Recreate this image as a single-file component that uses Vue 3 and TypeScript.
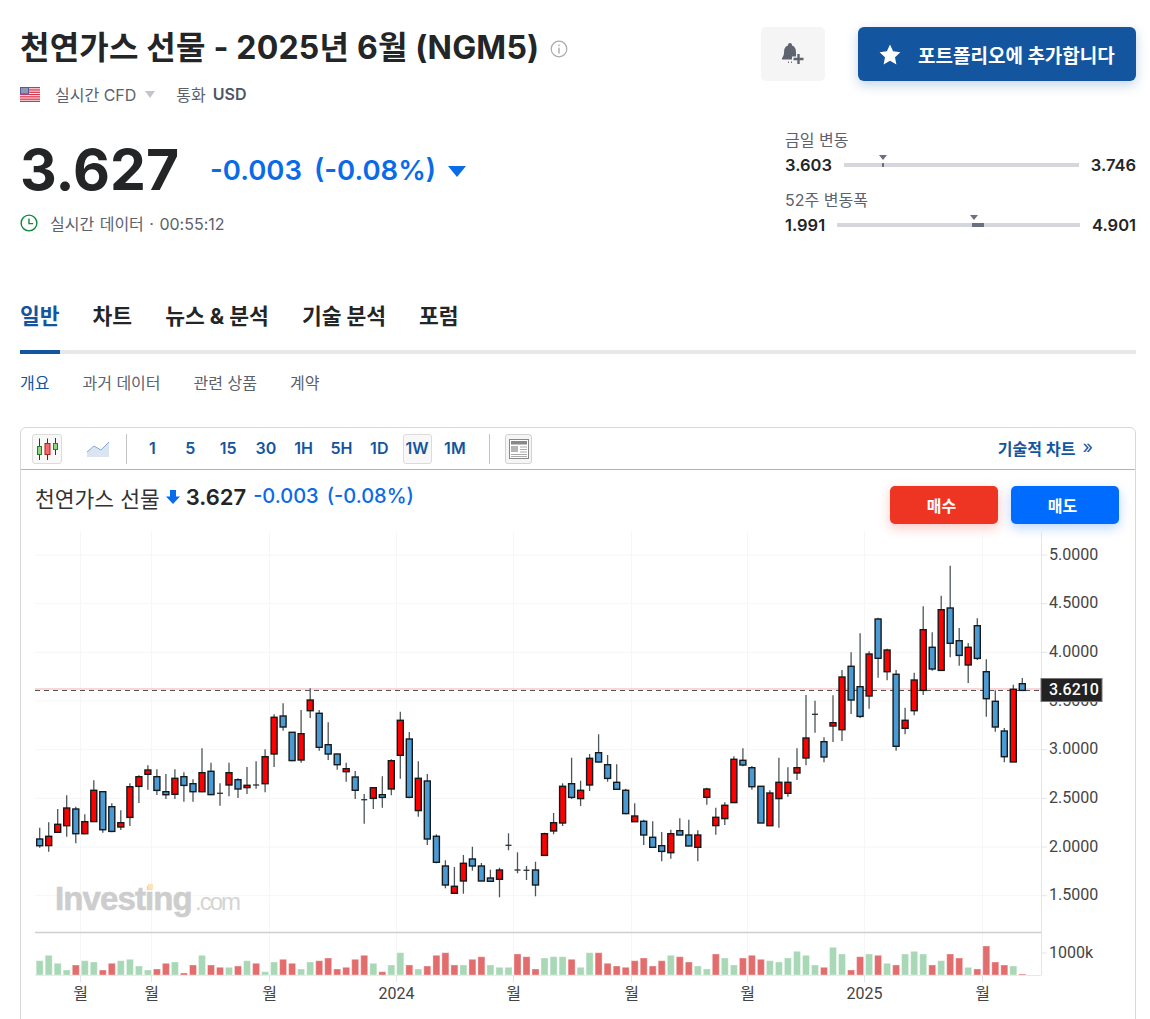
<script setup lang="ts">
type Kind = 'r' | 'b' | 'd'
type Raw = [number, number, number, number, Kind]

const seg1: Raw[] = [
  [443,477,497,503,'b'],[427,469,497,515,'r'],[387,433,457,459,'r'],[346,384,437,470,'r'],[380,387,461,490,'b'],
  [403,425,461,463,'r'],[301,331,425,425,'r'],[335,335,449,458,'b'],[370,380,454,457,'b'],[391,428,441,450,'r'],
  [310,320,412,438,'r'],[286,290,319,369,'r'],[256,270,283,329,'r'],[268,290,331,345,'b'],[282,335,344,357,'b'],
  [268,295,343,357,'r'],[277,290,316,365,'b'],[298,311,335,365,'b'],[205,278,335,337,'r'],[248,274,344,346,'b'],
  [310,340,343,377,'d'],[248,278,315,349,'r'],[295,299,327,354,'b'],[261,316,323,342,'r'],[244,315,316,326,'d'],
  [208,230,311,337,'r'],[103,112,222,261,'r'],[70,108,141,152,'b'],[157,157,242,244,'b'],[90,161,240,248,'r'],
  [25,60,92,114,'r'],[90,100,202,212,'b'],[127,194,222,240,'b'],[221,222,254,269,'b'],[248,266,275,305,'r'],
  [273,291,331,357,'b'],[342,359,360,431,'d'],[323,323,355,387,'r'],[289,344,352,383,'b'],[238,242,327,346,'r'],
  [95,121,226,296,'r'],
  [156,177,352,355,'b'],[244,295,392,410,'r'],[282,303,477,495,'b'],[463,469,547,550,'b'],[541,558,615,625,'b'],
  [561,619,640,640,'r'],[525,550,603,641,'r'],[500,537,558,572,'b'],[549,558,603,604,'b'],[569,594,604,604,'b'],
  [563,570,598,652,'r'],[460,496,497,511,'d'],[517,570,571,580,'d'],[558,571,574,600,'d'],[545,570,615,649,'b'],
  [458,461,526,526,'r'],[399,428,453,463,'r'],[310,319,429,438,'r'],[233,311,352,357,'b'],[302,331,356,378,'r'],
  [222,235,315,333,'r'],[163,218,246,248,'b'],[225,254,295,305,'b'],[253,307,328,329,'b'],[326,331,401,403,'b'],
  [370,408,425,425,'r'],[419,424,465,495,'b'],[424,472,502,502,'b'],[456,497,514,544,'b'],[449,461,518,536,'r'],
  [415,452,465,466,'b'],[419,465,498,499,'b'],[451,465,502,544,'r'],[323,327,352,374,'r'],[383,412,437,464,'r'],
  [367,376,416,435,'r'],[229,238,368,368,'r'],[205,241,255,259,'b'],[258,263,320,329,'b'],[319,319,429,429,'b'],
  [331,339,437,437,'r'],[233,307,356,443,'r'],[262,307,340,350,'r'],
]
const seg2: Raw[] = [
  [655,713,729,750,'r'],[495,624,684,706,'r'],[512,553,554,608,'d'],[622,635,681,697,'b'],[496,578,588,636,'r'],
  [420,441,599,633,'r'],[367,409,510,552,'b'],[310,470,559,564,'b'],[364,372,498,536,'r'],[263,267,385,443,'b'],
  [356,360,425,451,'r'],[420,433,649,662,'b'],[533,571,595,613,'r'],[428,450,542,556,'r'],[229,299,481,495,'r'],
  [307,352,417,422,'b'],[197,239,421,421,'r'],[107,234,340,382,'b'],[294,332,376,407,'b'],[339,352,405,459,'r'],
  [265,287,385,390,'b'],[388,425,506,560,'b'],[481,514,591,605,'b'],[594,603,680,697,'b'],[464,478,696,696,'r'],
  [444,461,481,482,'b'],
]
const STEP = 9.015
const candles = [
  ...seg1.map((c) => ({ c, base: 680 })),
  ...seg2.map((c) => ({ c, base: 530 })),
].map(({ c, base }, i) => {
  const [hi, top, bot, lo, kind] = c
  const x = 39.7 + STEP * i
  const toY = (z: number) => +(base + z / 3).toFixed(1)
  return { x: +x.toFixed(1), hi: toY(hi), top: toY(top), h: +((bot - top) / 3).toFixed(1), lo: toY(lo), kind }
})

const volTops = [
  122,106,130,150,135,122,126,150,130,122,118,138,150,147,130,126,159,135,106,135,
  142,142,138,122,130,155,126,118,130,147,126,122,114,147,142,118,106,130,155,135,
  98,135,147,138,106,98,135,135,118,110,135,142,142,102,110,147,114,110,110,118,142,
  98,98,130,138,142,122,114,138,122,106,110,126,138,147,102,114,135,114,106,118,
  122,126,114,94,106,135,142,82,102,150,110,102,106,130,135,102,94,102,135,122,
  102,114,142,147,78,126,135,138,162,
]
const volColors =
  'ggggrggrrggggrrgrrgrrgrgrggrrggrrrrrrgrggrgrrrrgrrgggrrrgggrg' +
  'grrrrrrrrgrrggrggrrrggggggrggrrgrgrgggrgrrgrrrrgr'
const volumes = volTops.map((t, i) => ({
  x: +(39.7 + STEP * i - 3.5).toFixed(1),
  y: +(920 + t / 3).toFixed(1),
  h: +(55 - t / 3).toFixed(1),
  up: volColors[i] === 'g',
}))

const prices = ['5.0000','4.5000','4.0000','3.5000','3.0000','2.5000','2.0000','1.5000'].map((label, i) => ({
  label,
  y: +(555 + 48.67 * i).toFixed(1),
}))
const months = [
  { x: 80, t: '월' }, { x: 151, t: '월' }, { x: 269, t: '월' }, { x: 396, t: '2024' }, { x: 513, t: '월' },
  { x: 631, t: '월' }, { x: 747, t: '월' }, { x: 864, t: '2025' }, { x: 982, t: '월' },
]
const intervals = ['1','5','15','30','1H','5H','1D','1W','1M']
const tabs = ['일반','차트','뉴스 & 분석','기술 분석','포럼']
const subTabs = ['개요','과거 데이터','관련 상품','계약']
const ranges = [
  { label: '금일 변동', low: '3.603', high: '3.746', tri: 16.7, segLeft: 16.2, segWidth: '2px' },
  { label: '52주 변동폭', low: '1.991', high: '4.901', tri: 56.2, segLeft: 55.4, segWidth: '12px' },
]
</script>

<template>
  <div class="page">
    <section class="top">
      <div class="left">
        <div class="title-row">
          <h1 class="title">천연가스 선물 - 2025년 6월 (NGM5)</h1>
          <svg class="info" width="18" height="18" viewBox="0 0 18 18">
            <circle cx="9" cy="9" r="7.8" fill="none" stroke="#a8abb0" stroke-width="1.2" />
            <rect x="8.3" y="7.6" width="1.4" height="6" fill="#a8abb0" />
            <rect x="8.3" y="4.6" width="1.4" height="1.5" fill="#a8abb0" />
          </svg>
        </div>
        <div class="meta">
          <svg class="flag" width="20" height="15" viewBox="0 0 20 15">
            <rect width="20" height="15" fill="#fff" />
            <g fill="#d8324a">
              <rect y="0" width="20" height="1.3" /><rect y="2.3" width="20" height="1.3" />
              <rect y="4.6" width="20" height="1.3" /><rect y="6.9" width="20" height="1.3" />
              <rect y="9.2" width="20" height="1.3" /><rect y="11.5" width="20" height="1.3" />
              <rect y="13.7" width="20" height="1.3" />
            </g>
            <rect width="9" height="7.4" fill="#585c96" />
            <rect x="1" y="1" width="7" height="5.4" fill="#9296b8" />
          </svg>
          <span class="meta-text">실시간 CFD</span>
          <i class="meta-caret"></i>
          <span class="meta-text cur">통화</span>
          <b class="meta-usd">USD</b>
        </div>
        <div class="price-row">
          <span class="price">3.627</span>
          <span class="change">-0.003</span>
          <span class="change pct">(-0.08%)</span>
          <i class="down-tri"></i>
        </div>
        <div class="clock-row">
          <svg width="18" height="18" viewBox="0 0 18 18">
            <circle cx="9" cy="9" r="7.9" fill="none" stroke="#0c8a3a" stroke-width="1.4" />
            <path d="M9 4.4V9.6H13.2" fill="none" stroke="#0c8a3a" stroke-width="1.4" />
          </svg>
          <span>실시간 데이터 · 00:55:12</span>
        </div>
      </div>
      <div class="right">
        <div class="actions">
          <button class="bell-btn">
            <svg width="26" height="24" viewBox="0 0 26 24">
              <path fill="#5f6470" d="M10 1c1.2 0 2 .9 2 2v.6c2.6.8 3.9 3 3.9 5.6 0 3.2.7 5 2.1 6.8v1.5H2v-1.5c1.4-1.8 2.1-3.6 2.1-6.8 0-2.6 1.3-4.8 3.9-5.6V3c0-1.1.8-2 2-2z" />
              <path d="M8 20.2h.9M11 20.2h.9" stroke="#5f6470" stroke-width="1.6" />
              <path d="M18.5 10.5v13M12 17h13" stroke="#f5f5f6" stroke-width="5" />
              <path d="M18.5 12v10M13.5 17h10" stroke="#5f6470" stroke-width="2.4" />
            </svg>
          </button>
          <button class="add-btn">
            <svg width="22" height="21" viewBox="0 0 22 21">
              <path fill="#fff" d="M11 .6l3.1 6.7 7.3.9-5.4 5 1.4 7.2L11 16.8l-6.4 3.6L6 13.2.6 8.2l7.3-.9z" />
            </svg>
            <span>포트폴리오에 추가합니다</span>
          </button>
        </div>
        <div class="ranges">
          <div v-for="r in ranges" :key="r.label" class="range">
            <div class="range-label">{{ r.label }}</div>
            <div class="range-row">
              <b>{{ r.low }}</b>
              <div class="bar">
                <i class="bar-tri" :style="{ left: r.tri + '%' }"></i>
                <i class="bar-seg" :style="{ left: r.segLeft + '%', width: r.segWidth }"></i>
              </div>
              <b>{{ r.high }}</b>
            </div>
          </div>
        </div>
      </div>
    </section>

    <nav class="tabs">
      <a v-for="(t, i) in tabs" :key="t" class="tab" :class="{ active: i === 0 }">{{ t }}</a>
    </nav>
    <nav class="subtabs">
      <a v-for="(t, i) in subTabs" :key="t" class="subtab" :class="{ active: i === 0 }">{{ t }}</a>
    </nav>

    <section class="card">
      <div class="toolbar">
        <button class="tool-btn boxed">
          <svg width="28" height="28" viewBox="0 0 28 28">
            <path d="M6.5 3.5V25M14.5 3.5V25M22.5 3V20" stroke="#333" stroke-width="1" />
            <rect x="4.5" y="11.5" width="4" height="8" fill="#8fd27f" stroke="#2d7a2d" />
            <rect x="12" y="8.5" width="5" height="11" fill="#f46a6a" stroke="#b02020" />
            <rect x="20.5" y="8.5" width="4" height="6" fill="#8fd27f" stroke="#2d7a2d" />
          </svg>
        </button>
        <button class="tool-btn area">
          <svg width="24" height="18" viewBox="0 0 24 18">
            <path d="M1 12L8 6l7 4 8-8v15H1z" fill="#dbe5f2" />
            <path d="M1 12L8 6l7 4 8-8" fill="none" stroke="#8aa8cf" stroke-width="1" />
          </svg>
        </button>
        <i class="tool-sep first"></i>
        <div class="intervals">
          <button v-for="v in intervals" :key="v" class="interval" :class="{ on: v === '1W' }">{{ v }}</button>
        </div>
        <i class="tool-sep second"></i>
        <button class="tool-btn news">
          <svg width="20" height="20" viewBox="0 0 20 20">
            <rect x="0.5" y="0.5" width="19" height="19" fill="#fff" stroke="#888" />
            <rect x="2" y="2" width="16" height="3.5" fill="#888" />
            <rect x="2" y="7" width="7" height="6" fill="#b5b5b5" />
            <path d="M11 8h7M11 10.5h7M11 13h7M2 15.5h16M2 17.5h16" stroke="#aaa" stroke-width="1" />
          </svg>
        </button>
        <a class="tech-link">기술적 차트<span class="chev">»</span></a>
      </div>

      <div class="legend">
        <div class="legend-info">
          <span class="legend-name">천연가스 선물</span>
          <svg class="legend-arrow" width="14" height="14" viewBox="0 0 14 14">
            <path d="M4 0h6v6.5h4L7 14 0 6.5h4z" fill="#0a6be8" />
          </svg>
          <b class="legend-price">3.627</b>
          <span class="legend-change">-0.003</span>
          <span class="legend-change">(-0.08%)</span>
        </div>
        <div class="trade">
          <button class="buy">매수</button>
          <button class="sell">매도</button>
        </div>
      </div>

      <svg class="chart" width="1114" height="487" viewBox="21 532 1114 487">
        <g stroke="#f6f6f7" stroke-width="1">
          <line v-for="m in months" :key="'v' + m.x" :x1="m.x + 0.5" :x2="m.x + 0.5" y1="532" y2="975" />
          <line v-for="p in prices" :key="'h' + p.label" x1="35" x2="1041" :y1="p.y" :y2="p.y" />
        </g>
        <text class="wm-a" x="55" y="910">Investing</text>
        <text class="wm-b" x="195" y="910">.com</text>
        <rect x="148" y="884" width="5" height="5.5" fill="#fbe3bc" />

        <line x1="35" x2="1041" y1="689" y2="689" stroke="#f8c8c8" stroke-width="1.5" />
        <line x1="35" x2="1041" y1="690.5" y2="690.5" stroke="#555" stroke-width="1" stroke-dasharray="5 4" />

        <g v-for="(c, i) in candles" :key="i">
          <line :x1="c.x" :x2="c.x" :y1="c.hi" :y2="c.lo" stroke="#4c5659" stroke-width="1.3" />
          <line v-if="c.kind === 'd'" :x1="c.x - 3" :x2="c.x + 3" :y1="c.top" :y2="c.top" stroke="#2a3033" stroke-width="1.3" />
          <rect
            v-else
            :x="c.x - 3"
            :y="c.top"
            width="6"
            :height="c.h"
            :fill="c.kind === 'r' ? '#ff0000' : '#4a9bd4'"
            stroke="#16191b"
            stroke-width="1.4"
          />
        </g>

        <line x1="1041.5" x2="1041.5" y1="532" y2="975" stroke="#e2e5eb" />
        <line x1="35" x2="1041" y1="932.5" y2="932.5" stroke="#cfcfcf" stroke-width="1.5" />
        <line x1="35" x2="1041" y1="975.5" y2="975.5" stroke="#e4e8ee" />

        <rect
          v-for="(v, i) in volumes"
          :key="'vol' + i"
          :x="v.x"
          :y="v.y"
          width="7"
          :height="v.h"
          :fill="v.up ? '#a8d8b6' : '#e36d6d'"
          stroke="#ffffff"
          stroke-opacity="0.35"
          stroke-width="1"
        />

        <g stroke="#e2e5eb">
          <line v-for="m in months" :key="'t' + m.x" :x1="m.x + 0.5" :x2="m.x + 0.5" y1="975" y2="982" />
          <line v-for="p in prices" :key="'pt' + p.label" x1="1041" x2="1047" :y1="p.y" :y2="p.y" />
          <line x1="1041" x2="1047" y1="953" y2="953" />
        </g>

        <text v-for="p in prices" :key="'l' + p.label" class="axis" x="1049" :y="p.y + 4.6">{{ p.label }}</text>
        <text class="axis" x="1049" y="958">1000k</text>
        <text v-for="m in months" :key="'m' + m.x" class="axis" :x="m.x + 0.5" y="999" text-anchor="middle">{{ m.t }}</text>

        <rect x="1041" y="678.5" width="61" height="23" fill="#222" stroke="#777" stroke-width="1" />
        <text class="axis box" x="1049" y="695">3.6210</text>
      </svg>
    </section>
  </div>
</template>

<style>
html, body { margin: 0; padding: 0; overflow: hidden; background: #fff; }
</style>

<style scoped>
.page {
  box-sizing: border-box;
  width: 1150px;
  height: 1019px;
  overflow: hidden;
  padding: 27px 14px 0 20px;
  font-family: Inter, "Noto Sans CJK KR", sans-serif;
  color: #232526;
}
.top { display: flex; justify-content: space-between; height: 207px; }
.title-row { display: flex; align-items: center; height: 42px; gap: 11px; }
.title { margin: 0; font-size: 32px; letter-spacing: 0.2px; line-height: 42px; font-weight: 700; white-space: nowrap; }
.info { margin-top: 2px; }
.meta { display: flex; align-items: center; height: 20px; margin-top: 15px; font-size: 16px; color: #5b616e; }
.flag { margin-right: 15px; }
.meta-caret { width: 0; height: 0; margin: 0 21px 0 9px; border-left: 5px solid transparent; border-right: 5px solid transparent; border-top: 7px solid #c2c6cc; }
.meta-usd { margin-left: 7px; font-weight: 600; font-size: 16px; color: #4f5563; }
.price-row { display: flex; align-items: center; height: 60px; margin-top: 36px; }
.price { font-size: 57px; line-height: 60px; font-weight: 700; width: 190px; }
.change { font-size: 27.5px; font-weight: 600; color: #0a6be8; }
.pct { margin-left: 12px; }
.down-tri { width: 0; height: 0; margin-left: 12px; margin-top: 2px; border-left: 9.5px solid transparent; border-right: 9.5px solid transparent; border-top: 11px solid #0a6be8; }
.clock-row { display: flex; align-items: center; gap: 12px; height: 20px; margin-top: 13px; font-size: 16px; word-spacing: 1px; color: #5b616e; }
.right { width: 375px; }
.actions { display: flex; justify-content: space-between; height: 54px; }
button { border: 0; padding: 0; font-family: inherit; cursor: pointer; }
.bell-btn { width: 64px; height: 54px; border-radius: 5px; background: #f5f5f6; display: flex; align-items: center; justify-content: center; }
.add-btn { width: 278px; height: 54px; border-radius: 6px; background: #14559f; color: #fff; font-size: 19px; font-weight: 700; display: flex; align-items: center; gap: 17px; padding-left: 21px; box-shadow: 0 4px 12px rgba(20, 85, 159, 0.25); box-sizing: border-box; white-space: nowrap; }
.ranges { margin: 49px 0 0 24px; }
.range + .range { margin-top: 15px; }
.range-label { height: 20px; line-height: 20px; font-size: 16px; color: #5b616e; }
.range-row { display: flex; align-items: center; gap: 12px; height: 20px; margin-top: 5px; font-size: 16.5px; }
.range-row b { font-weight: 600; }
.bar { position: relative; flex: 1; height: 4px; background: #d5d7dc; }
.bar-seg { position: absolute; top: 0; height: 4px; background: #6a7080; }
.bar-tri { position: absolute; top: -8px; width: 0; height: 0; margin-left: -4px; border-left: 4px solid transparent; border-right: 4px solid transparent; border-top: 5px solid #6a7080; }
.tabs { display: flex; gap: 33px; margin-top: 68px; height: 48px; border-bottom: 4px solid #e6e9eb; }
.tab { font-size: 21.5px; line-height: 28px; font-weight: 700; height: 48px; box-sizing: border-box; color: #232526; }
.tab.active { color: #14559f; height: 52px; border-bottom: 4px solid #14559f; }
.subtabs { display: flex; gap: 33px; height: 20px; margin-top: 19px; font-size: 16px; line-height: 20px; color: #5b616e; }
.subtab.active { color: #14559f; }
.card { box-sizing: border-box; height: 640px; margin-top: 34px; border: 1px solid #d8d8d8; border-radius: 6px; }
.toolbar { display: flex; align-items: center; height: 41px; padding-left: 11px; border-bottom: 1px solid #b4b4b4; box-sizing: content-box; }
.tool-btn { display: flex; align-items: center; justify-content: center; background: none; height: 30px; }
.tool-btn.boxed { width: 30px; box-sizing: border-box; background: #f8f8f8; border: 1px solid #dcdcdc; border-radius: 3px; }
.tool-btn.area { width: 30px; margin-left: 21px; }
.tool-sep { width: 1px; height: 30px; background: #c4c4c4; }
.tool-sep.first { margin-left: 13px; margin-right: 11px; }
.tool-sep.second { margin-left: 20px; margin-right: 15px; }
.intervals { display: flex; gap: 8.8px; }
.interval { width: 29px; height: 30px; box-sizing: border-box; background: none; border-radius: 3px; color: #14559f; font-size: 16px; font-weight: 600; white-space: nowrap; text-align: center; display: flex; align-items: center; justify-content: center; padding-bottom: 1px; }
.interval.on { background: #f8f8f8; border: 1px solid #dcdcdc; }
.tool-btn.news { width: 27px; box-sizing: border-box; background: #f5f5f5; border: 1px solid #d2d2d2; border-radius: 3px; }
.tech-link { margin-left: auto; margin-right: 42px; color: #14559f; font-size: 16px; font-weight: 600; display: flex; align-items: center; margin-top: -1px; }
.chev { margin-left: 7px; font-size: 18px; font-weight: 400; line-height: 20px; margin-top: -3px; }
.legend { display: flex; justify-content: space-between; height: 62px; padding: 0 16px 0 14px; }
.legend-info { display: flex; align-items: center; height: 20px; margin-top: 17px; }
.legend-name { font-size: 21.5px; color: #333; }
.legend-arrow { margin-left: 6px; margin-right: 6px; }
.legend-price { font-size: 22px; font-weight: 600; color: #232526; margin-right: 7px; }
.legend-change { font-size: 20px; font-weight: 500; color: #0a6be8; margin-right: 8px; margin-top: -2px; }
.trade { display: flex; gap: 13px; margin-top: 16px; }
.buy, .sell { width: 108px; height: 38px; border-radius: 5px; color: #fff; font-size: 16px; font-weight: 700; padding-right: 5px; box-sizing: border-box; }
.buy { background: #ee3524; box-shadow: 0 4px 12px rgba(238, 53, 36, 0.28); }
.sell { background: #006cff; box-shadow: 0 4px 12px rgba(0, 108, 255, 0.28); }
.chart { display: block; }
.axis { font-family: Roboto, "Noto Sans CJK KR", sans-serif; font-size: 16px; fill: #444; }
.axis.box { fill: #fff; font-weight: 500; }
.wm-a { font-family: "Liberation Sans", sans-serif; font-size: 33px; font-weight: 700; letter-spacing: -0.9px; fill: #cdcdcd; stroke: #cdcdcd; stroke-width: 0.6px; }
.wm-b { font-family: "Liberation Sans", sans-serif; font-size: 24px; letter-spacing: -2px; fill: #d4d4d4; }
</style>
